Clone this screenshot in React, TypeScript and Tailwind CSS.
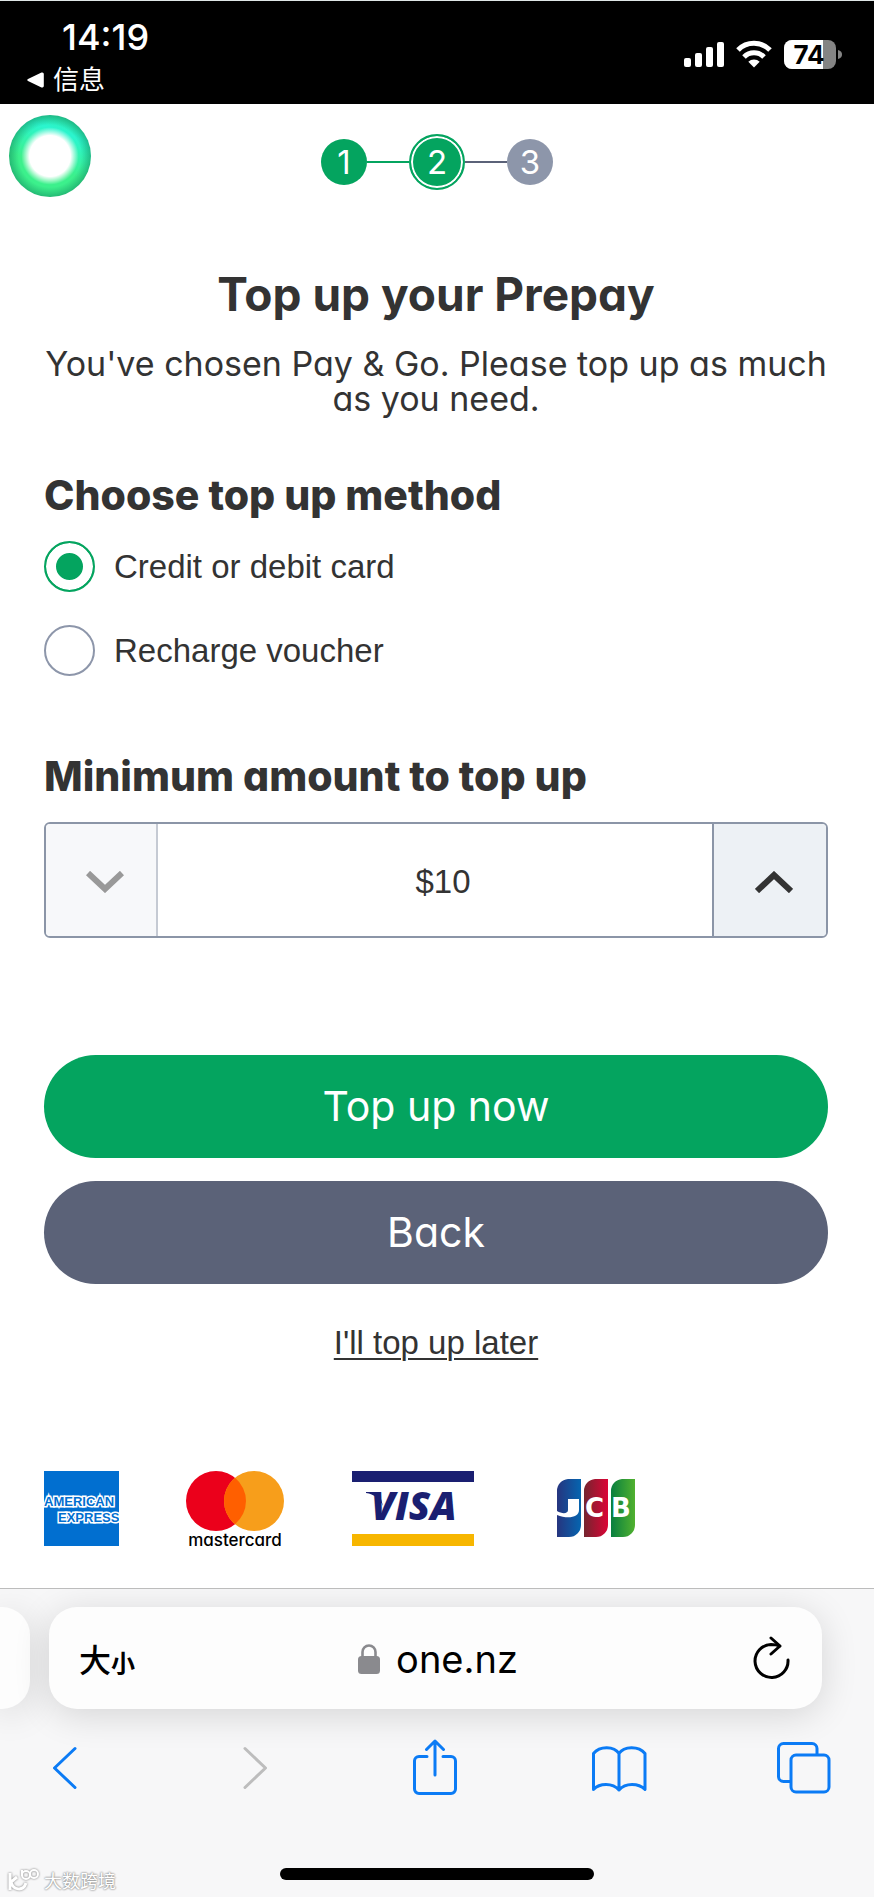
import { useState } from 'react';
import type { ReactNode } from 'react';

const METHODS = [
  { id: 'card', label: 'Credit or debit card' },
  { id: 'voucher', label: 'Recharge voucher' },
];

const MIN_AMOUNT = 10;

function StatusBar() {
  return (
    <header className="flex items-start justify-between border-t border-[#dfe6e6] bg-black pt-4 pb-[10px] pl-[27px] pr-8 text-white">
      <div>
        <p className="pl-[35px] text-[36px] leading-10 font-medium">14:19</p>
        <a href="#messages" className="mt-[9px] flex items-center gap-[9px] text-[26px] leading-7">
          <svg viewBox="0 0 17 16" className="h-4 w-[17px]" aria-hidden="true">
            <path d="M14.5 0.6 1 7a1.2 1.2 0 0 0 0 2l13.500 6.400a1.600 1.600 0 0 0 2.300-1.400V2A1.600 1.600 0 0 0 14.500.6Z" fill="currentColor" />
          </svg>
          信息
        </a>
      </div>
      <div className="flex items-center pt-[23px]">
        <svg viewBox="0 0 158 30" className="h-[30px] w-[158px]" role="img" aria-label="Signal, Wi-Fi, battery 74%">
          <g fill="#fff">
            <rect x="0" y="18" width="7" height="9" rx="2" />
            <rect x="11" y="13" width="7" height="14" rx="2" />
            <rect x="22" y="7" width="7" height="20" rx="2" />
            <rect x="33" y="2" width="7" height="25" rx="2" />
          </g>
          <g fill="none" stroke="#fff" strokeWidth="5">
            <path d="M54 10a22.500 22.500 0 0 1 32 0" />
            <path d="M60 17a14 14 0 0 1 20 0" />
          </g>
          <path d="M70 27.500 64.300 21.700a8.200 8.200 0 0 1 11.400 0Z" fill="#fff" />
          <clipPath id="battery">
            <rect x="100" y="0" width="52" height="29" rx="8" />
          </clipPath>
          <g clipPath="url(#battery)">
            <rect x="100" y="0" width="52" height="29" fill="#848484" />
            <rect x="100" y="0" width="39" height="29" fill="#fff" />
          </g>
          <path d="M154 10c3 .8 4 2.500 4 4.500s-1 3.700-4 4.500Z" fill="#848484" />
          <text x="125" y="24" textAnchor="middle" fontSize="26" fontWeight="700" fill="#000">74</text>
        </svg>
      </div>
    </header>
  );
}

function Steps() {
  return (
    <ol className="flex items-center justify-center pl-[2px] text-[33px] leading-none text-white" aria-label="Progress">
      <li className="flex size-[46px] items-center justify-center rounded-full bg-[#04a45f]">1</li>
      <li className="h-[2px] w-[42px] bg-[#04a45f]" aria-hidden="true" />
      <li
        aria-current="step"
        className="flex size-14 items-center justify-center rounded-full border-2 border-[#04a45f] bg-[#04a45f] shadow-[inset_0_0_0_2px_white]"
      >
        2
      </li>
      <li className="h-[2px] w-[42px] bg-[#5b6278]" aria-hidden="true" />
      <li className="flex size-[46px] items-center justify-center rounded-full bg-[#8d96aa]">3</li>
    </ol>
  );
}

function AmountStepper() {
  const [amount, setAmount] = useState(MIN_AMOUNT);
  const atMin = amount <= MIN_AMOUNT;

  return (
    <div className="mt-[22px] flex h-[116px] overflow-hidden rounded-md border-2 border-[#8b95a7]">
      <button
        type="button"
        aria-label="Decrease amount"
        disabled={atMin}
        onClick={() => setAmount(amount - 10)}
        className="flex w-28 items-center justify-center border-r-2 border-[#c5cad3] bg-[#f7f8fa] pt-1 pl-2 text-[#999]"
      >
        <svg viewBox="0 0 38 22" className="h-[22px] w-[38px]" fill="none" stroke="currentColor" strokeWidth="6">
          <path d="m2 2 17 16L36 2" />
        </svg>
      </button>
      <input
        id="amount"
        readOnly
        value={`$${amount}`}
        className="min-w-0 flex-1 bg-white pt-1 pl-4 text-center font-['Liberation_Sans',Arial,sans-serif] text-[33px] outline-none"
      />
      <button
        type="button"
        aria-label="Increase amount"
        onClick={() => setAmount(amount + 10)}
        className="flex w-[114px] items-center justify-center border-l-2 border-[#8b95a7] bg-[#edf1f5] pt-1 pl-2 text-[#333]"
      >
        <svg viewBox="0 0 38 22" className="h-[22px] w-[38px]" fill="none" stroke="currentColor" strokeWidth="6">
          <path d="m2 20 17-16 17 16" />
        </svg>
      </button>
    </div>
  );
}

function CardLogos() {
  return (
    <div className="mt-[108px] flex gap-[68px]">
      <svg viewBox="0 0 75 75" className="size-[75px] shrink-0" role="img" aria-label="American Express">
        <rect width="75" height="75" fill="#016fd0" />
        <g
          fill="#016fd0"
          stroke="#fff"
          strokeWidth="3"
          paintOrder="stroke"
          fontFamily="Liberation Sans, Arial, sans-serif"
          fontWeight="700"
          fontSize="13"
        >
          <text x="0" y="35">AMERICAN</text>
          <text x="14" y="51">EXPRESS</text>
        </g>
      </svg>
      <svg viewBox="0 0 97 75" className="h-[75px] w-[97px] shrink-0 overflow-visible" role="img" aria-label="Mastercard">
        <circle cx="29" cy="30" r="30" fill="#eb001b" />
        <circle cx="67" cy="30" r="30" fill="#f79e1b" />
        <path d="M48 6.800a30 30 0 0 1 0 46.400 30 30 0 0 1 0-46.400Z" fill="#ff5f00" />
        <text x="48" y="75" textAnchor="middle" fontSize="17" fontWeight="500" fill="#000">mastercard</text>
      </svg>
      <svg viewBox="0 0 122 75" className="h-[75px] w-[122px] shrink-0" role="img" aria-label="Visa">
        <rect width="122" height="11" fill="#1a1f71" />
        <rect y="63" width="122" height="12" fill="#f7b600" />
        <path d="M14 21h13l4 14c-3-7-9-12-17-13Z" fill="#1a1f71" />
        <text
          x="19"
          y="49"
          fontFamily="Open Sans, sans-serif"
          fontStyle="italic"
          fontWeight="800"
          fontSize="39"
          fill="#1a1f71"
        >
          VISA
        </text>
      </svg>
      <svg viewBox="0 0 102 75" className="h-[75px] w-[102px] shrink-0" role="img" aria-label="JCB">
        <defs>
          <linearGradient id="jcbBlue">
            <stop offset="0" stopColor="#26357f" />
            <stop offset="1" stopColor="#0565b0" />
          </linearGradient>
          <linearGradient id="jcbRed">
            <stop offset="0" stopColor="#74252f" />
            <stop offset="1" stopColor="#dc0436" />
          </linearGradient>
          <linearGradient id="jcbGreen">
            <stop offset="0" stopColor="#087f3f" />
            <stop offset="1" stopColor="#51b12f" />
          </linearGradient>
        </defs>
        <path d="M26 8h13v46a12 12 0 0 1-12 12H15V20A12 12 0 0 1 26 8Z" fill="url(#jcbBlue)" />
        <path d="M53 8h13v46a12 12 0 0 1-12 12H42V20A12 12 0 0 1 53 8Z" fill="url(#jcbRed)" />
        <path d="M80 8h13v46a12 12 0 0 1-12 12H69V20A12 12 0 0 1 80 8Z" fill="url(#jcbGreen)" />
        <g fill="#fff" fontFamily="DejaVu Sans, sans-serif" fontWeight="700" fontSize="26">
          <path d="M15 40c5 3 11 3 11-1V28h11v11c0 8-12 9-22 5Z" />
          <text x="43" y="46">C</text>
          <text x="69" y="46">B</text>
        </g>
      </svg>
    </div>
  );
}

interface ToolButtonProps {
  label: string;
  disabled?: boolean;
  children: ReactNode;
}

function ToolButton({ label, disabled, children }: ToolButtonProps) {
  return (
    <button type="button" aria-label={label} disabled={disabled} className="text-[#0b7bf5] disabled:text-[#bdbdbd]">
      <svg
        viewBox="0 0 56 56"
        className="size-14"
        fill="none"
        stroke="currentColor"
        strokeWidth="3"
        strokeLinecap="round"
        strokeLinejoin="round"
      >
        {children}
      </svg>
    </button>
  );
}

function BrowserBar() {
  return (
    <footer className="overflow-hidden border-t border-[#bcbcbc] bg-[#f7f7f8] pt-[18px] pb-[17px]">
      <div className="flex gap-[19px]">
        <div className="h-[102px] w-[30px] rounded-r-[28px] bg-[#fdfdfd] shadow-[0_6px_36px_rgba(0,0,0,0.14)]" />
        <div className="mr-[52px] flex h-[102px] flex-1 items-center justify-between rounded-[28px] bg-[#fdfdfd] pr-[31px] pl-[30px] text-black shadow-[0_6px_36px_rgba(0,0,0,0.14)]">
          <button type="button" aria-label="Page settings" className="flex items-baseline font-['Noto_Sans_CJK_SC',sans-serif]">
            <span className="text-[32px] font-medium">大</span>
            <span className="text-2xl font-bold">小</span>
          </button>
          <p className="mr-3 flex items-center gap-4 pt-[2px] text-[38px] leading-[48px]">
            <svg viewBox="0 0 22 30" className="h-[30px] w-[22px]" aria-hidden="true">
              <path d="M4.500 14V8a6.500 6.500 0 0 1 13 0v6" fill="none" stroke="#8a8a8e" strokeWidth="2.600" />
              <rect y="12" width="22" height="18" rx="3.500" fill="#8a8a8e" />
            </svg>
            one.nz
          </p>
          <button type="button" aria-label="Reload">
            <svg
              viewBox="0 0 38 44"
              className="h-11 w-[38px]"
              fill="none"
              stroke="currentColor"
              strokeWidth="3"
              strokeLinecap="round"
              strokeLinejoin="round"
            >
              <path d="M35 24A16.500 16.500 0 1 1 18 8.500c3 0 6 .300 8.500 1.500" />
              <path d="m18 2 9 8-9 8" />
            </svg>
          </button>
        </div>
      </div>

      <nav className="mt-[30px] flex justify-between pr-[42px] pl-[37px]" aria-label="Browser">
        <ToolButton label="Back">
          <path d="M38 9.500 17.500 29 38 48.500" />
        </ToolButton>
        <ToolButton label="Forward" disabled>
          <path d="M23 9.500 43.500 29 23 48.500" />
        </ToolButton>
        <ToolButton label="Share">
          <path d="M20 17.500h-8a4.500 4.500 0 0 0-4.500 4.500v28a4.500 4.500 0 0 0 4.500 4.500h32a4.500 4.500 0 0 0 4.500-4.500V22a4.500 4.500 0 0 0-4.500-4.500h-8" />
          <path d="M28 36V2M19.500 10.500 28 2l8.500 8.500" />
        </ToolButton>
        <ToolButton label="Bookmarks">
          <path d="M28 14.500C23 7 9 6.500 2.500 14.500v36c6-6.500 19-7 25.500.500 6.500-7.500 19.500-7 26-.500v-36C47.500 6.500 33 7 28 14.500ZM28 14.500V51" />
        </ToolButton>
        <ToolButton label="Tabs">
          <path d="M14 42.500H7.500A5 5 0 0 1 2.500 37.500V9.500A5 5 0 0 1 7.500 4.500H36A5 5 0 0 1 41 9.500V15" />
          <rect x="15" y="16" width="38" height="37" rx="5" />
        </ToolButton>
      </nav>

      <div className="mx-auto mt-[73px] h-3 w-[314px] rounded-full bg-black" />
    </footer>
  );
}

function Watermark() {
  return (
    <div className="absolute bottom-[5px] left-2 flex items-center gap-1 font-['Noto_Sans_CJK_SC',sans-serif] text-lg leading-6 text-white [text-shadow:0_0_2px_#888,0_0_2px_#888]">
      <svg viewBox="0 0 32 24" className="h-6 w-8 drop-shadow-[0_0_1px_#777]" fill="none" stroke="#fff" aria-hidden="true">
        <path d="M2 5v17M9 9l-6 5c2 8 12 10 15 1" strokeWidth="3" />
        <path d="M14 2v6" strokeWidth="2" />
        <circle cx="18" cy="7" r="4" strokeWidth="2" />
        <circle cx="26" cy="6" r="4" strokeWidth="2" />
      </svg>
      大数跨境
    </div>
  );
}

export default function App() {
  const [method, setMethod] = useState('card');

  return (
    <div className="relative flex min-h-screen flex-col bg-white font-[Inter,'Noto_Sans_CJK_SC',sans-serif] text-[#333] [font-feature-settings:'cv11']">
      <StatusBar />

      <main className="relative flex-1 pt-[30px] pr-[46px] pb-[42px] pl-11">
        <div className="absolute top-[11px] left-[9px] size-[82px] rounded-full bg-[radial-gradient(circle_closest-side,#fff_50%,transparent_70%),radial-gradient(circle_closest-side,transparent_76%,rgba(20,150,100,0.6)_100%),linear-gradient(20deg,#3cf08c_40%,#2bf5cf_75%,#30e8a0)]" />
        <Steps />

        <h1 className="mt-[72px] text-center text-[46px] leading-[64px] font-bold">Top up your Prepay</h1>
        <p className="mt-5 text-center text-[34px] leading-[35px]">
          You've chosen Pay &amp; Go. Please top up as much as you need.
        </p>

        <fieldset className="mt-[55px]">
          <legend className="text-[41px] leading-[48px] font-extrabold">Choose top up method</legend>
          <div className="mt-[22px] flex flex-col gap-[33px]">
            {METHODS.map((m) => (
              <label key={m.id} className="flex items-center gap-[19px] font-['Liberation_Sans',Arial,sans-serif] text-[33px] leading-[51px]">
                <input
                  type="radio"
                  name="method"
                  value={m.id}
                  checked={method === m.id}
                  onChange={() => setMethod(m.id)}
                  className="size-[51px] appearance-none rounded-full border-2 border-[#8d96aa] bg-white checked:border-[#04a45f] checked:bg-[#04a45f] checked:shadow-[inset_0_0_0_10px_white]"
                />
                {m.label}
              </label>
            ))}
          </div>
        </fieldset>

        <label htmlFor="amount" className="mt-[76px] block text-[41px] leading-[48px] font-extrabold">
          Minimum amount to top up
        </label>
        <AmountStepper />

        <div className="mt-[117px] flex flex-col gap-[23px] text-[41px] text-white">
          <button type="button" className="h-[103px] rounded-full bg-[#04a45f]">Top up now</button>
          <button type="button" className="h-[103px] rounded-full bg-[#5b6278]">Back</button>
        </div>

        <p className="mt-[39px] text-center font-['Liberation_Sans',Arial,sans-serif] text-[33px] leading-10">
          <a href="#later" className="underline decoration-2 underline-offset-4">I'll top up later</a>
        </p>

        <CardLogos />
      </main>

      <BrowserBar />
      <Watermark />
    </div>
  );
}
